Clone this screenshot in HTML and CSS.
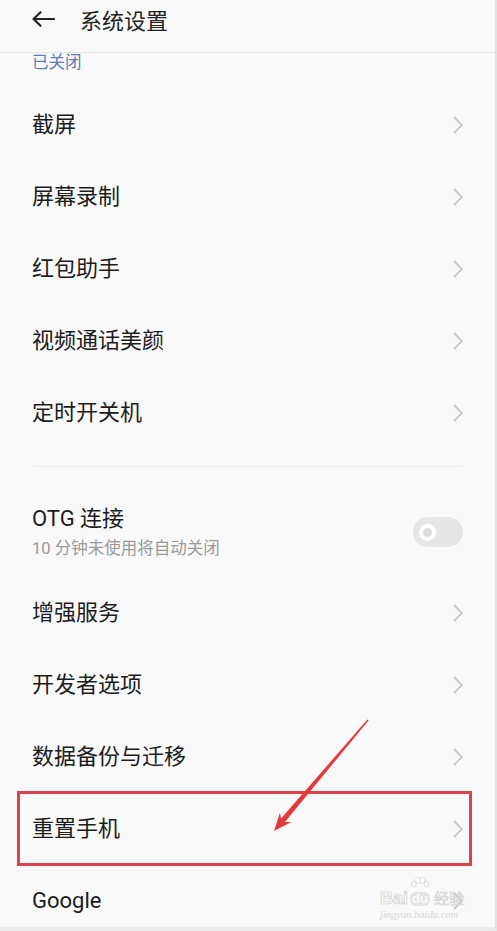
FILE: index.html
```html
<!DOCTYPE html>
<html lang="zh-CN">
<head>
<meta charset="utf-8">
<title>系统设置</title>
<link rel="stylesheet" href="styles.css">
</head>
<body>
<div class="frame">
  <header class="header">
    <svg class="back" width="24" height="16" viewBox="0 0 24 16"><path d="M23 8H2.5M9.5 1.2L2.5 8l7 6.8" fill="none" stroke="#222" stroke-width="2.2" stroke-linecap="round" stroke-linejoin="round"/></svg>
    <span class="title">系统设置</span>
  </header>
  <div class="partial">已关闭</div>

  <div class="row"><span class="label">截屏</span><svg class="chev" width="10" height="18" viewBox="0 0 10 18"><path d="M1 1l8 8-8 8" fill="none" stroke="#c8c8c8" stroke-width="1.8"/></svg></div>
  <div class="row"><span class="label">屏幕录制</span><svg class="chev" width="10" height="18" viewBox="0 0 10 18"><path d="M1 1l8 8-8 8" fill="none" stroke="#c8c8c8" stroke-width="1.8"/></svg></div>
  <div class="row"><span class="label">红包助手</span><svg class="chev" width="10" height="18" viewBox="0 0 10 18"><path d="M1 1l8 8-8 8" fill="none" stroke="#c8c8c8" stroke-width="1.8"/></svg></div>
  <div class="row"><span class="label">视频通话美颜</span><svg class="chev" width="10" height="18" viewBox="0 0 10 18"><path d="M1 1l8 8-8 8" fill="none" stroke="#c8c8c8" stroke-width="1.8"/></svg></div>
  <div class="row"><span class="label">定时开关机</span><svg class="chev" width="10" height="18" viewBox="0 0 10 18"><path d="M1 1l8 8-8 8" fill="none" stroke="#c8c8c8" stroke-width="1.8"/></svg></div>

  <div class="divider"></div>

  <div class="row-otg">
    <div class="otg-text">
      <div class="label otg-title">OTG 连接</div>
      <div class="otg-sub">10 分钟未使用将自动关闭</div>
    </div>
    <div class="toggle"><span class="knob"></span></div>
  </div>

  <div class="row"><span class="label">增强服务</span><svg class="chev" width="10" height="18" viewBox="0 0 10 18"><path d="M1 1l8 8-8 8" fill="none" stroke="#c8c8c8" stroke-width="1.8"/></svg></div>
  <div class="row"><span class="label">开发者选项</span><svg class="chev" width="10" height="18" viewBox="0 0 10 18"><path d="M1 1l8 8-8 8" fill="none" stroke="#c8c8c8" stroke-width="1.8"/></svg></div>
  <div class="row"><span class="label">数据备份与迁移</span><svg class="chev" width="10" height="18" viewBox="0 0 10 18"><path d="M1 1l8 8-8 8" fill="none" stroke="#c8c8c8" stroke-width="1.8"/></svg></div>
  <div class="row"><span class="label">重置手机</span><svg class="chev" width="10" height="18" viewBox="0 0 10 18"><path d="M1 1l8 8-8 8" fill="none" stroke="#c8c8c8" stroke-width="1.8"/></svg></div>
  <div class="row"><span class="label">Google</span><svg class="chev" width="10" height="18" viewBox="0 0 10 18"><path d="M1 1l8 8-8 8" fill="none" stroke="#c8c8c8" stroke-width="1.8"/></svg></div>

  <div class="highlight"></div>
  <svg class="arrow" width="495" height="927" viewBox="0 0 495 927">
    <polygon points="274,831 291.5,822 285,822 368.6,720.4 367.4,719.6 281,818.5 280,812.5" fill="#e23b3e"/>
  </svg>

  <div class="watermark">
    <div class="wm-top">
      <span class="wm-bai">Bai</span>
      <span class="wm-du">
        <svg class="paw" width="20" height="15" viewBox="0 0 20 15"><g fill="#fff" stroke="#cfcfcf" stroke-width="0.8"><ellipse cx="4" cy="7" rx="2.4" ry="3"/><ellipse cx="8" cy="3.5" rx="2.4" ry="3"/><ellipse cx="12.5" cy="3.5" rx="2.4" ry="3"/><ellipse cx="16.5" cy="7" rx="2.4" ry="3"/></g></svg>
        <span class="wm-dutext">du</span>
      </span>
      <span class="wm-jy">经验</span>
    </div>
    <div class="wm-url">jingyan.baidu.com</div>
  </div>
</div>
</body>
</html>
```

FILE: styles.css
```css
html, body {
  margin: 0;
  padding: 0;
  background: #f9f9f9;
}
body {
  width: 497px;
  height: 931px;
  overflow: hidden;
  font-family: Roboto, "Noto Sans CJK SC", sans-serif;
}
.frame {
  position: relative;
  width: 495px;
  height: 927px;
  border-right: 2px solid #e2e2e2;
  border-bottom: 4px solid #ebebeb;
  overflow: hidden;
  background: #f9f9f9;
}
.header {
  display: flex;
  align-items: center;
  height: 38px;
  padding: 0 0 14px 31px;
  border-bottom: 1px solid #e6e6e6;
  gap: 25px;
}
.back { display: block; }
.title {
  font-family: "Noto Sans CJK SC", sans-serif;
  font-size: 22px;
  line-height: 38px;
  color: #222;
}
.partial {
  height: 36px;
  padding-left: 32px;
  font-family: "Noto Sans CJK SC", sans-serif;
  font-size: 16.5px;
  line-height: 16px;
  color: #5a7db3;
}
.row {
  display: flex;
  align-items: center;
  justify-content: space-between;
  height: 72px;
  padding: 0 32px 0 32px;
}
.label {
  font-size: 22px;
  color: #1c1c1c;
  line-height: 28px;
}
.chev { display: block; }
.divider {
  height: 1px;
  margin: 17px 32px 0 33px;
  background: #ececec;
}
.row-otg {
  display: flex;
  align-items: center;
  justify-content: space-between;
  padding: 38px 32px 18px 32px;
}
.otg-title { line-height: 28px; }
.otg-sub {
  margin-top: 6px;
  font-size: 16.5px;
  line-height: 20px;
  color: #9a9a9a;
}
.toggle {
  width: 50px;
  height: 30px;
  border-radius: 15px;
  background: #e6e6e6;
  display: flex;
  align-items: center;
}
.knob {
  width: 9px;
  height: 9px;
  margin-left: 6px;
  border: 4px solid #ffffff;
  border-radius: 50%;
  background: #dcdcdc;
}
.highlight {
  position: absolute;
  left: 17px;
  top: 791px;
  width: 455px;
  height: 75px;
  box-sizing: border-box;
  border: 3px solid #d9434a;
}
.arrow {
  position: absolute;
  left: 0;
  top: 0;
  pointer-events: none;
}
.watermark {
  position: absolute;
  left: 380px;
  top: 876px;
  width: 92px;
  opacity: 0.9;
}
.wm-top {
  display: flex;
  align-items: flex-end;
  height: 30px;
}
.wm-bai, .wm-dutext {
  font-family: "Liberation Sans", sans-serif;
  font-weight: bold;
  font-size: 18px;
  line-height: 16px;
  color: #fafafa;
  -webkit-text-stroke: 0.7px #c9c9c9;
}
.wm-du {
  display: flex;
  flex-direction: column;
  align-items: center;
  margin-left: 2px;
}
.paw { display: block; }
.wm-dutext {
  font-size: 13px;
  line-height: 13px;
  padding: 0 2px 1px;
  border-radius: 6px;
  background: #e2e2e2;
  color: #fafafa;
  -webkit-text-stroke: 0;
}
.wm-jy {
  margin-left: 4px;
  font-family: "Noto Sans CJK SC", sans-serif;
  font-size: 15px;
  line-height: 16px;
  color: #fafafa;
  -webkit-text-stroke: 0.6px #c9c9c9;
}
.wm-url {
  margin-top: 4px;
  font-family: "Liberation Serif", serif;
  font-style: italic;
  font-size: 10.5px;
  line-height: 10px;
  color: #d2d2d2;
}
```
